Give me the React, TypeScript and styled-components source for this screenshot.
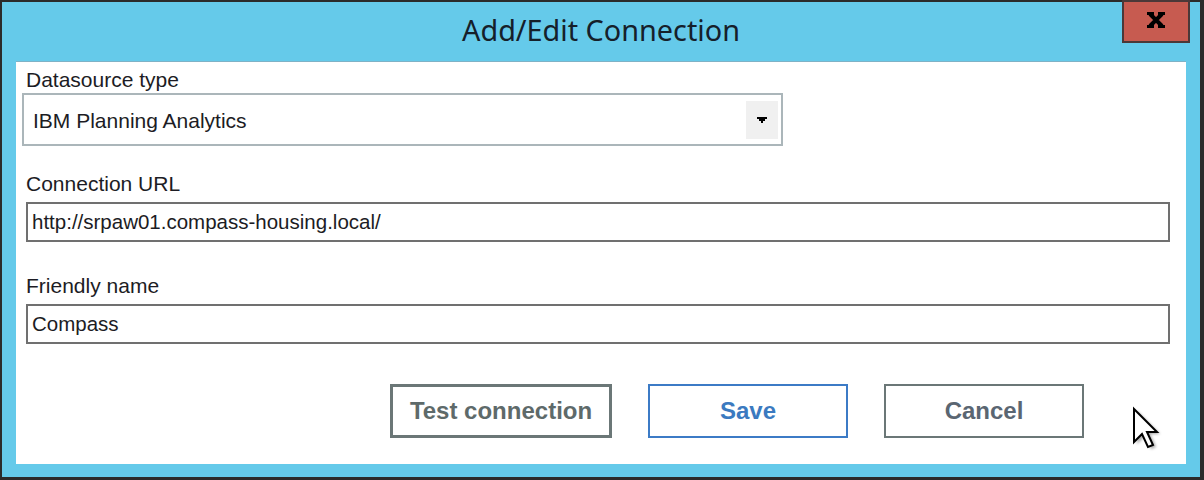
import React from "react";
import styled, { createGlobalStyle } from "styled-components";

const GlobalStyle = createGlobalStyle`
  html, body { margin: 0; padding: 0; background: #2b2b2b; }
  body { font-family: "Liberation Sans", Arial, sans-serif; }
  * { box-sizing: border-box; }
`;

const Window = styled.div`
  position: relative;
  width: 1204px;
  height: 480px;
  background: #65caea;
  border-style: solid;
  border-color: #2b2b2b;
  border-width: 2px 4px 3px 2px;
  display: flex;
  flex-direction: column;
`;

const TitleBar = styled.div`
  height: 59px;
  flex: none;
  display: flex;
  align-items: center;
  justify-content: center;
  padding-bottom: 3px;
`;

const Title = styled.div`
  font-family: "Noto Sans", "Open Sans", sans-serif;
  font-size: 28.8px;
  line-height: 32px;
  color: #15202a;
`;

const CloseButton = styled.div`
  position: absolute;
  top: -2px;
  right: 10px;
  width: 68px;
  height: 43px;
  background: #c75b50;
  border: 2px solid #4b3838;
  display: flex;
  align-items: center;
  justify-content: center;
  padding-bottom: 4px;
`;

const Content = styled.div`
  flex: 1;
  margin: 0 14px 13px 14px;
  background: #ffffff;
  border-top: 1px solid #7fb2c6;
  display: flex;
  flex-direction: column;
  padding: 6px 16px 0 10px;
`;

const Label = styled.div<{ $top: number }>`
  font-size: 21px;
  line-height: 24px;
  color: #1c1c24;
  margin-top: ${(p) => p.$top}px;
`;

const Combo = styled.div`
  margin-top: 1px;
  margin-left: -4px;
  width: 761px;
  height: 53px;
  border: 2px solid #abb6ba;
  display: flex;
  align-items: center;
  padding: 2px 3px 0 9px;
`;

const ComboText = styled.div`
  flex: 1;
  font-size: 21px;
  line-height: 24px;
  color: #1c1c24;
`;

const DropButton = styled.div`
  width: 32px;
  height: 38px;
  margin-top: -2px;
  background: #f0f0f0;
  display: flex;
  align-items: center;
  justify-content: center;
`;

const TextInput = styled.div`
  margin-top: 6px;
  height: 40px;
  border: 2px solid #707070;
  display: flex;
  align-items: center;
  padding: 0 4px;
  font-size: 20.5px;
  line-height: 24px;
  color: #1c1c24;
`;

const ButtonRow = styled.div`
  display: flex;
  gap: 36px;
  margin-top: 40px;
  padding-left: 364px;
`;

const Button = styled.div<{ $variant: "test" | "save" | "cancel" }>`
  width: ${(p) => (p.$variant === "test" ? 222 : 200)}px;
  height: 54px;
  border: ${(p) =>
    p.$variant === "test"
      ? "3px solid #6b7777"
      : p.$variant === "save"
      ? "2px solid #3c7bc6"
      : "2px solid #6b7777"};
  display: flex;
  align-items: center;
  justify-content: center;
  font-weight: bold;
  font-size: 24px;
  line-height: 24px;
  color: ${(p) =>
    p.$variant === "save" ? "#3b7ac0" : p.$variant === "test" ? "#5e6a6a" : "#5a6672"};
`;

const Cursor = styled.svg`
  position: absolute;
  left: 1130px;
  top: 405px;
  overflow: visible;
`;

function CloseGlyph() {
  return (
    <svg width="18" height="16" viewBox="0 0 18 16">
      <path d="M3 2 L15 14 M15 2 L3 14" stroke="#000" strokeWidth="4" />
      <rect x="0" y="0" width="7" height="3" fill="#000" />
      <rect x="11" y="0" width="7" height="3" fill="#000" />
      <rect x="0" y="13" width="7" height="3" fill="#000" />
      <rect x="11" y="13" width="7" height="3" fill="#000" />
    </svg>
  );
}

function DropArrow() {
  return (
    <svg width="10" height="6" viewBox="0 0 10 6" shapeRendering="crispEdges">
      <rect x="0" y="0" width="10" height="2" fill="#000" />
      <rect x="2" y="2" width="6" height="2" fill="#000" />
      <rect x="4" y="4" width="2" height="2" fill="#000" />
    </svg>
  );
}

export default function App() {
  return (
    <>
      <GlobalStyle />
      <Window>
        <TitleBar>
          <Title>Add/Edit Connection</Title>
        </TitleBar>
        <CloseButton>
          <CloseGlyph />
        </CloseButton>
        <Content>
          <Label $top={0}>Datasource type</Label>
          <Combo>
            <ComboText>IBM Planning Analytics</ComboText>
            <DropButton>
              <DropArrow />
            </DropButton>
          </Combo>
          <Label $top={26}>Connection URL</Label>
          <TextInput>http://srpaw01.compass-housing.local/</TextInput>
          <Label $top={32}>Friendly name</Label>
          <TextInput>Compass</TextInput>
          <ButtonRow>
            <Button $variant="test">Test connection</Button>
            <Button $variant="save">Save</Button>
            <Button $variant="cancel">Cancel</Button>
          </ButtonRow>
        </Content>
      </Window>
      <Cursor width="30" height="46" viewBox="0 0 30 46">
        <defs>
          <filter id="sh" x="-50%" y="-50%" width="200%" height="200%">
            <feGaussianBlur stdDeviation="1.8" />
          </filter>
        </defs>
        <path
          d="M7 6 L7 39 L15 31 L21 44 L26 42 L20 29 L30 29 Z"
          fill="#000"
          opacity="0.35"
          filter="url(#sh)"
        />
        <path
          d="M4 4 L4 37 L12 29 L18 42 L23 40 L17 27 L27 27 Z"
          fill="#fff"
          stroke="#000"
          strokeWidth="2"
          strokeLinejoin="miter"
        />
      </Cursor>
    </>
  );
}
